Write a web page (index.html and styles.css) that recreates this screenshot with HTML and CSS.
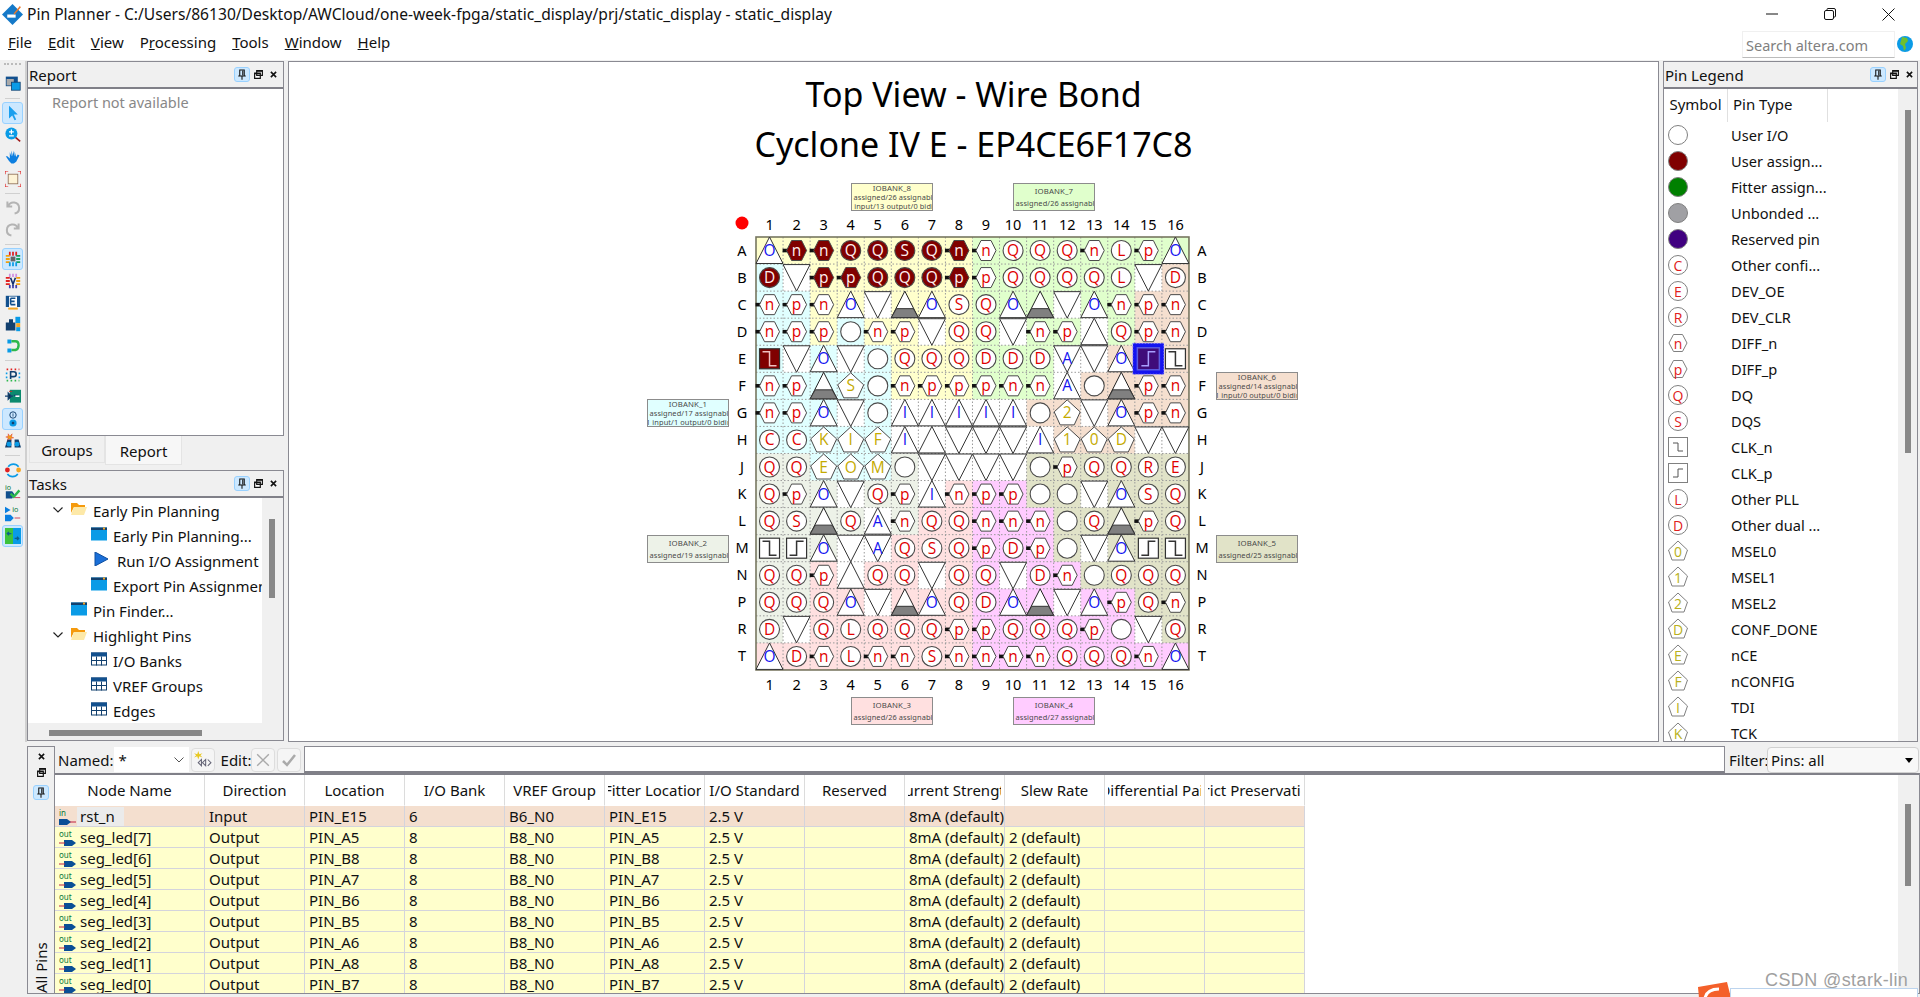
FILE: index.html
```html
<!DOCTYPE html>
<html lang="en">
<head>
    <meta charset="UTF-8">
    <title>Pin Planner</title>
    <link rel="stylesheet" href="styles.css">
</head>
<body>
    <svg class="defs" width="0" height="0">
        <symbol id="i-pin" viewBox="0 0 16 16"><path d="M5 2h6v8H5zM8 10v5M3 10h10M9 3v6" fill="none" stroke="#111" stroke-width="1.4"/></symbol>
        <symbol id="i-float" viewBox="0 0 10 10"><path d="M3 .7h6.3V6H3zM.7 3.5H7v5.8H.7z" fill="#fff" stroke="#111" stroke-width="1.3"/><path d="M3 1.2h6.3M.7 4h6.3" stroke="#111" stroke-width="1.6"/></symbol>
        <symbol id="i-close" viewBox="0 0 8 8"><path d="M1 1l6 6M7 1L1 7" stroke="#111" stroke-width="1.8"/></symbol>
        <symbol id="i-window" viewBox="0 0 16 14"><rect width="16" height="13" y="0.5" fill="#0a9be6"/><rect width="16" height="2.5" y="0.5" fill="#12406e"/><rect x="12" y="0.5" width="2" height="2" fill="#f5a623"/></symbol>
        <symbol id="i-folder" viewBox="0 0 16 14"><path d="M0 1h6l2 2h6v2H3L0 11z" fill="#f59a0c"/><path d="M3 5h13l-3 8H0z" fill="#fde9a8"/></symbol>
        <symbol id="i-table" viewBox="0 0 16 13"><rect x=".5" y=".5" width="15" height="12" fill="#fff" stroke="#12406e"/><rect width="16" height="4" fill="#12508e"/><path d="M0 8h16M5.500 4v9M10.500 4v9" stroke="#12406e"/></symbol>
        <symbol id="i-in" viewBox="0 0 17 17"><path d="M0 10h8l4 3-4 3H0z" fill="#0a4f96"/><path d="M11 13h6" stroke="#c02040"/></symbol>
        <symbol id="i-out" viewBox="0 0 17 17"><path d="M5 10h8l4 3-4 3H5z" fill="#0a4f96"/><path d="M0 13h6" stroke="#c02040"/></symbol>
    </svg>

    <header class="titlebar">
        <svg class="app-logo" viewBox="0 0 20 20">
            <path d="M10 0l10 10-10 10L0 10z" fill="#1579c8"/>
            <path d="M5 10h8v3H5z" fill="#fff"/>
            <path d="M11 9l6-7 1 1-6 7z" fill="#e8782a"/>
        </svg>
        <span class="title-text">Pin Planner - C:/Users/86130/Desktop/AWCloud/one-week-fpga/static_display/prj/static_display - static_display</span>
        <div class="win-buttons">
            <svg width="12" height="12" viewBox="0 0 12 12"><path d="M0 6h12" stroke="#111"/></svg>
            <svg width="12" height="12" viewBox="0 0 12 12"><path d="M3 2.500V1.500q0-1 1-1h6q1.500 0 1.500 1.500v6q0 1-1 1h-1" fill="none" stroke="#111"/><rect x=".5" y="2.500" width="9" height="9" rx="1.500" fill="none" stroke="#111"/></svg>
            <svg width="13" height="13" viewBox="0 0 13 13"><path d="M.5 .5l12 12M12.500 .5l-12 12" stroke="#111"/></svg>
        </div>
    </header>

    <nav class="menubar">
        <span><u>F</u>ile</span>
        <span><u>E</u>dit</span>
        <span><u>V</u>iew</span>
        <span>P<u>r</u>ocessing</span>
        <span><u>T</u>ools</span>
        <span><u>W</u>indow</span>
        <span><u>H</u>elp</span>
        <div class="search">Search altera.com</div>
        <svg class="globe" viewBox="0 0 16 16"><circle cx="8" cy="8" r="8" fill="#0b9be6"/><path d="M5 1l5 1 1 3-3 3 1 4-2 3-1-5-3-2 1-3z" fill="#6fbf30"/></svg>
    </nav>

    <div class="main">
        <aside class="toolbar">
            <div class="grip"></div>
            <div class="tool first"><svg viewBox="0 0 20 20"><rect x="1" y="2" width="15" height="12" fill="#12508e"/><rect x="2" y="5" width="9" height="8" fill="#aaa"/><rect x="8" y="9" width="11" height="10" fill="#0a9be6" stroke="#12406e"/></svg></div>
            <div class="sep"></div>
            <div class="tool on"><svg viewBox="0 0 20 20"><path d="M5 1v16l4-4 3 6 2-1-3-6h5z" fill="#1a9fee"/></svg></div>
            <div class="tool"><svg viewBox="0 0 20 20"><path d="M12 12l7 6" stroke="#a01c1c" stroke-width="2"/><circle cx="8" cy="8" r="7.500" fill="#0a9be6"/><path d="M5 6h6M8 3v6M5 11h6" stroke="#fff" stroke-width="1.500"/></svg></div>
            <div class="tool"><svg viewBox="0 0 20 20"><path d="M3 9l3 3V4l2 5V2l2 7V2l2 7V3l2 7 2-3 2 1-4 8-3 2H8l-3-3-4-6z" fill="#0d7fe0"/></svg></div>
            <div class="tool"><svg viewBox="0 0 20 20"><rect x="4" y="4" width="12" height="12" fill="#fdf3d6" stroke="#8a6a50"/><path d="M0 4V0h4M16 0h4v4M20 16v4h-4M4 20H0v-4" fill="none" stroke="#e02020" stroke-width="1.500"/></svg></div>
            <div class="sep"></div>
            <div class="tool"><svg viewBox="0 0 20 20"><path d="M3 2v6h6M4 8a7 7 0 1 1 8 9" fill="none" stroke="#b4b4b4" stroke-width="2.500"/></svg></div>
            <div class="tool"><svg viewBox="0 0 20 20"><path d="M17 2v6h-6M16 8a7 7 0 1 0-8 9" fill="none" stroke="#b4b4b4" stroke-width="2.500"/></svg></div>
            <div class="sep"></div>
            <div class="tool on"><svg viewBox="0 0 20 20"><rect x="7" y="7" width="6" height="6" fill="#666"/><path d="M6 1v5M10 1v5M14 1v5" stroke="#e02020" stroke-width="2.200"/><path d="M1 6h5M1 10h5M1 14h5" stroke="#f0a010" stroke-width="2.200"/><path d="M14 6h5M14 10h5M14 14h5" stroke="#16a060" stroke-width="2.200"/><path d="M6 14v5M10 14v5M14 14v5" stroke="#0a9be6" stroke-width="2.200"/></svg></div>
            <div class="tool"><svg viewBox="0 0 20 20"><path d="M6 1v4M10 1v4M14 1v4" stroke="#d090e0" stroke-width="2.200"/><path d="M1 6h5M1 10h5M1 14h5" stroke="#e02020" stroke-width="2.200"/><path d="M14 6h5M14 10h5M14 14h5" stroke="#f0a010" stroke-width="2.200"/><path d="M6 15v4M10 15v4M14 15v4" stroke="#4040b0" stroke-width="2.200"/><path d="M7 6l3 8 3-8" fill="none" stroke="#12306e" stroke-width="2"/></svg></div>
            <div class="tool"><svg viewBox="0 0 20 20"><rect x="1" y="1" width="18" height="14" fill="#12508e"/><rect x="5" y="2" width="10" height="13" fill="#fff"/><path d="M7 4h6M7 8h5M7 12h6M7 4v8" stroke="#12508e" stroke-width="2"/><path d="M4 17h12" stroke="#f5a623" stroke-width="2.500"/></svg></div>
            <div class="tool"><svg viewBox="0 0 20 20"><path d="M1 8h4V4h5v4h3v10H1z" fill="#12406e"/><rect x="13" y="1" width="6" height="8" fill="#0a9be6"/><rect x="14" y="9" width="5" height="5" fill="#f5a623"/><rect x="14" y="14" width="5" height="5" fill="#0a9be6"/></svg></div>
            <div class="tool"><svg viewBox="0 0 20 20"><path d="M3 2h5v5H3zM3 13h5v5H3z" fill="#0a9be6"/><path d="M8 4h5q4 0 4 5t-4 6H8" fill="none" stroke="#2db84d" stroke-width="3"/></svg></div>
            <div class="sep"></div>
            <div class="tool"><svg viewBox="0 0 20 20"><path d="M2 3h2M7 3h2M12 3h2M17 3h1" stroke="#e02020" stroke-width="2"/><path d="M2 17h2M7 17h2M12 17h2M17 17h1" stroke="#2db84d" stroke-width="2"/><path d="M2 7v2M18 7v2M2 12v2M18 12v2" stroke="#0a9be6" stroke-width="2"/><path d="M7 15V6h4q3 0 3 3t-3 3H7" fill="none" stroke="#12406e" stroke-width="2"/></svg></div>
            <div class="tool"><svg viewBox="0 0 20 20"><rect x="6" y="1" width="14" height="16" fill="#0c8a6e"/><path d="M0 9h10M4 5l4 4-4 4zM11 8h6" stroke="#12406e" stroke-width="1.500"/><path d="M13 9h5" stroke="#fff" stroke-width="2"/><path d="M5 3h4" stroke="#e02020"/></svg></div>
            <div class="tool on"><svg viewBox="0 0 20 20"><circle cx="10" cy="5" r="4" fill="none" stroke="#12406e" stroke-width="1.200"/><path d="M10 3v4" stroke="#12406e"/><circle cx="10" cy="15" r="4.500" fill="#0a9be6"/><rect x="8.500" y="13.500" width="3" height="3" fill="#12406e"/></svg></div>
            <div class="tool"><svg viewBox="0 0 20 20"><path d="M3 8h5v10H0zM12 8h5l3 10h-8z" fill="#12406e"/><circle cx="5" cy="14" r="3" fill="#0a9be6"/><circle cx="15" cy="14" r="3" fill="#0a9be6"/><path d="M4 1l2 3 3-3-1 4 3 1-4 1 1 2-3-2-2 2 1-3-3-1 3-1z" fill="#f0a010" stroke="#e02020" stroke-width=".5"/></svg></div>
            <div class="sep"></div>
            <div class="tool"><svg viewBox="0 0 20 20"><path d="M4 6a8 8 0 0 1 13 0M16 15a8 8 0 0 1-13 0" fill="none" stroke="#0a9be6" stroke-width="2"/><circle cx="3" cy="10" r="3" fill="#e02020"/><circle cx="17" cy="10" r="3" fill="#f5a623"/></svg></div>
            <div class="tool"><svg viewBox="0 0 20 20"><text x="0" y="8" class="tool-text">io</text><path d="M1 9h8l3 4-3 5H1z" fill="#12508e"/><path d="M7 12l4 4 7-8" fill="none" stroke="#2db84d" stroke-width="3"/><path d="M12 17h7" stroke="#c02040"/></svg></div>
            <div class="tool"><svg viewBox="0 0 20 20"><path d="M0 1l7 4-7 4zM0 11h7l4 4-4 4H0z" fill="#0a7fe0"/><text x="9" y="8" class="tool-text">io</text><path d="M12 15h7" stroke="#c02040"/></svg></div>
            <div class="tool on"><svg viewBox="0 0 20 20"><rect width="10" height="20" x="10" fill="#0a9be6"/><rect width="10" height="20" fill="#3cc23c"/><path d="M8 7H3m2-2L3 7l2 2M12 13h5m-2-2 2 2-2 2" fill="none" stroke="#0b5e8e" stroke-width="1.800"/></svg></div>
        </aside>

        <div class="left-col">
            <section class="panel report">
                <div class="panel-head">
                    <span>Report</span>
                    <div class="head-btns">
                        <span class="pin-btn"><svg><use href="#i-pin"/></svg></span>
                        <svg class="btn-float"><use href="#i-float"/></svg>
                        <svg class="btn-close"><use href="#i-close"/></svg>
                    </div>
                </div>
                <div class="report-body">Report not available</div>
            </section>
            <div class="tabs">
                <div class="tab">Groups</div>
                <div class="tab active">Report</div>
            </div>
            <section class="panel tasks">
                <div class="panel-head">
                    <span>Tasks</span>
                    <div class="head-btns">
                        <span class="pin-btn"><svg><use href="#i-pin"/></svg></span>
                        <svg class="btn-float"><use href="#i-float"/></svg>
                        <svg class="btn-close"><use href="#i-close"/></svg>
                    </div>
                </div>
                <div class="tree-wrap">
                    <ul class="tree">
                        <li class="lvl1"><svg class="chev" viewBox="0 0 10 6"><path d="M.5 .5L5 5 9.500 .5" fill="none" stroke="#222" stroke-width="1.200"/></svg><svg class="ticon"><use href="#i-folder"/></svg>Early Pin Planning</li>
                        <li class="lvl2"><svg class="ticon"><use href="#i-window"/></svg>Early Pin Planning...</li>
                        <li class="lvl2"><svg class="ticon play" viewBox="0 0 16 14"><path d="M1 0l13 7-13 7z" fill="#1a6fd8" stroke="#0d4fa0"/></svg>Run I/O Assignment Analysis</li>
                        <li class="lvl2"><svg class="ticon"><use href="#i-window"/></svg>Export Pin Assignments...</li>
                        <li class="lvl1"><svg class="ticon"><use href="#i-window"/></svg>Pin Finder...</li>
                        <li class="lvl1"><svg class="chev" viewBox="0 0 10 6"><path d="M.5 .5L5 5 9.500 .5" fill="none" stroke="#222" stroke-width="1.200"/></svg><svg class="ticon"><use href="#i-folder"/></svg>Highlight Pins</li>
                        <li class="lvl2"><svg class="ticon"><use href="#i-table"/></svg>I/O Banks</li>
                        <li class="lvl2"><svg class="ticon"><use href="#i-table"/></svg>VREF Groups</li>
                        <li class="lvl2"><svg class="ticon"><use href="#i-table"/></svg>Edges</li>
                    </ul>
                    <div class="vscroll"><div class="thumb tree-thumb"></div></div>
                </div>
                <div class="hscroll"><div class="hthumb"></div></div>
            </section>
        </div>

        <section class="center">
            <h1 class="chip-title">Top View - Wire Bond<br>Cyclone IV E - EP4CE6F17C8</h1>
            <div class="package">
                <svg id="pin-grid" class="pin-grid" viewBox="289 170 1369 569" width="1369" height="569"></svg>
                <div class="bank bank-8"><span>IOBANK_8</span><span>3 assigned/26 assignable</span><span>1 input/13 output/0 bidir</span></div>
                <div class="bank bank-7 two"><span>IOBANK_7</span><span>0 assigned/26 assignable</span></div>
                <div class="bank bank-1"><span>IOBANK_1</span><span>1 assigned/17 assignable</span><span>1 input/1 output/0 bidir</span></div>
                <div class="bank bank-2 two"><span>IOBANK_2</span><span>0 assigned/19 assignable</span></div>
                <div class="bank bank-3 two"><span>IOBANK_3</span><span>0 assigned/26 assignable</span></div>
                <div class="bank bank-4 two"><span>IOBANK_4</span><span>0 assigned/27 assignable</span></div>
                <div class="bank bank-5 two"><span>IOBANK_5</span><span>0 assigned/25 assignable</span></div>
                <div class="bank bank-6"><span>IOBANK_6</span><span>1 assigned/14 assignable</span><span>1 input/0 output/0 bidir</span></div>
            </div>
        </section>

        <section class="panel legend">
            <div class="panel-head">
                <span>Pin Legend</span>
                <div class="head-btns">
                    <span class="pin-btn"><svg><use href="#i-pin"/></svg></span>
                    <svg class="btn-float"><use href="#i-float"/></svg>
                    <svg class="btn-close"><use href="#i-close"/></svg>
                </div>
            </div>
            <div class="legend-wrap">
                <div class="legend-list">
                    <div class="legend-head"><span class="lh-sym">Symbol</span><span class="lh-type">Pin Type</span></div>
                    <div id="legend-rows"></div>
                </div>
                <div class="vscroll"><div class="thumb legend-thumb"></div></div>
            </div>
        </section>
    </div>

    <div class="bottom">
        <div class="strip">
            <svg class="btn-close"><use href="#i-close"/></svg>
            <svg class="btn-float"><use href="#i-float"/></svg>
            <span class="pin-btn"><svg><use href="#i-pin"/></svg></span>
            <span class="strip-label">All Pins</span>
        </div>
        <div class="bottom-main">
            <div class="filterbar">
                <label>Named:</label>
                <div class="combo"><span>*</span><svg viewBox="0 0 10 6"><path d="M.5 .5L5 5 9.500 .5" fill="none" stroke="#555"/></svg></div>
                <div class="sq-btn wand"><svg viewBox="0 0 18 18"><path d="M5 1l1 3 3-1-2 2 2 2-3-1-1 3-1-3-3 1 2-2-2-2 3 1z" fill="#e8c820"/><path d="M5 12l3-3v6zM9 12l3-3v6z" fill="none" stroke="#667"/><path d="M14 9l3 3-3 3" fill="none" stroke="#667"/></svg></div>
                <label class="edit-label">Edit:</label>
                <div class="sq-btn"><svg viewBox="0 0 12 12"><path d="M1 1l10 10M11 1L1 11" stroke="#aaa" stroke-width="1.200"/></svg></div>
                <div class="sq-btn"><svg viewBox="0 0 14 12"><path d="M1 7l4 4 8-10" fill="none" stroke="#aaa" stroke-width="2.500"/></svg></div>
                <div class="edit-input"></div>
                <label class="filter-label">Filter:</label>
                <div class="filter-select"><span>Pins: all</span><i class="caret"></i></div>
            </div>
            <div class="table-area">
                <table class="pins">
                    <colgroup><col class="c-name"><col span="11" class="c-std"></colgroup>
                    <thead>
                        <tr>
                            <th><div>Node Name</div></th>
                            <th><div>Direction</div></th>
                            <th><div>Location</div></th>
                            <th><div>I/O Bank</div></th>
                            <th><div>VREF Group</div></th>
                            <th><div>Fitter Location</div></th>
                            <th><div>I/O Standard</div></th>
                            <th><div>Reserved</div></th>
                            <th><div>Current Strength</div></th>
                            <th><div>Slew Rate</div></th>
                            <th><div>Differential Pair</div></th>
                            <th><div>Strict Preservation</div></th>
                        </tr>
                    </thead>
                    <tbody>
                        <tr class="row-in"><td class="node"><svg viewBox="0 0 17 17"><text y="7" class="tiny">in</text><use href="#i-in"/></svg><span class="sel-name">rst_n</span></td><td>Input</td><td>PIN_E15</td><td>6</td><td>B6_N0</td><td>PIN_E15</td><td>2.5 V</td><td></td><td>8mA (default)</td><td></td><td></td><td></td></tr>
                        <tr><td class="node"><svg viewBox="0 0 17 17"><text y="7" class="tiny">out</text><use href="#i-out"/></svg>seg_led[7]</td><td>Output</td><td>PIN_A5</td><td>8</td><td>B8_N0</td><td>PIN_A5</td><td>2.5 V</td><td></td><td>8mA (default)</td><td>2 (default)</td><td></td><td></td></tr>
                        <tr><td class="node"><svg viewBox="0 0 17 17"><text y="7" class="tiny">out</text><use href="#i-out"/></svg>seg_led[6]</td><td>Output</td><td>PIN_B8</td><td>8</td><td>B8_N0</td><td>PIN_B8</td><td>2.5 V</td><td></td><td>8mA (default)</td><td>2 (default)</td><td></td><td></td></tr>
                        <tr><td class="node"><svg viewBox="0 0 17 17"><text y="7" class="tiny">out</text><use href="#i-out"/></svg>seg_led[5]</td><td>Output</td><td>PIN_A7</td><td>8</td><td>B8_N0</td><td>PIN_A7</td><td>2.5 V</td><td></td><td>8mA (default)</td><td>2 (default)</td><td></td><td></td></tr>
                        <tr><td class="node"><svg viewBox="0 0 17 17"><text y="7" class="tiny">out</text><use href="#i-out"/></svg>seg_led[4]</td><td>Output</td><td>PIN_B6</td><td>8</td><td>B8_N0</td><td>PIN_B6</td><td>2.5 V</td><td></td><td>8mA (default)</td><td>2 (default)</td><td></td><td></td></tr>
                        <tr><td class="node"><svg viewBox="0 0 17 17"><text y="7" class="tiny">out</text><use href="#i-out"/></svg>seg_led[3]</td><td>Output</td><td>PIN_B5</td><td>8</td><td>B8_N0</td><td>PIN_B5</td><td>2.5 V</td><td></td><td>8mA (default)</td><td>2 (default)</td><td></td><td></td></tr>
                        <tr><td class="node"><svg viewBox="0 0 17 17"><text y="7" class="tiny">out</text><use href="#i-out"/></svg>seg_led[2]</td><td>Output</td><td>PIN_A6</td><td>8</td><td>B8_N0</td><td>PIN_A6</td><td>2.5 V</td><td></td><td>8mA (default)</td><td>2 (default)</td><td></td><td></td></tr>
                        <tr><td class="node"><svg viewBox="0 0 17 17"><text y="7" class="tiny">out</text><use href="#i-out"/></svg>seg_led[1]</td><td>Output</td><td>PIN_A8</td><td>8</td><td>B8_N0</td><td>PIN_A8</td><td>2.5 V</td><td></td><td>8mA (default)</td><td>2 (default)</td><td></td><td></td></tr>
                        <tr><td class="node"><svg viewBox="0 0 17 17"><text y="7" class="tiny">out</text><use href="#i-out"/></svg>seg_led[0]</td><td>Output</td><td>PIN_B7</td><td>8</td><td>B8_N0</td><td>PIN_B7</td><td>2.5 V</td><td></td><td>8mA (default)</td><td>2 (default)</td><td></td><td></td></tr>
                    </tbody>
                </table>
                <div class="vscroll table-scroll"><div class="thumb table-thumb"></div></div>
            </div>
        </div>
    </div>

    <!-- screenshot leftovers: blog watermark and the popup under it -->
    <div class="watermark">CSDN @stark-lin</div>
    <svg class="csdn-logo" viewBox="0 0 34 16"><path d="M1 5L30 0l4 16H2z" fill="#f4602a"/><path d="M22 7q-12 0-14 9" fill="none" stroke="#fff" stroke-width="3"/></svg>
    <div class="popup-bar"></div>

    <script src="pins.js"></script>
</body>
</html>
```

FILE: styles.css
```css
* {
    box-sizing: border-box;
}

body {
    margin: 0;
    width: 1920px;
    height: 997px;
    overflow: hidden;
    position: relative;
    background-color: #f0f0f0;
    color: #111;
    font-family: "Noto Sans", sans-serif;
    font-size: 15px;
}

.defs {
    position: absolute;
}

.tiny {
    font-size: 8px;
    fill: #0a7a3a;
    font-family: "Noto Sans", sans-serif;
}

.tool-text {
    font-size: 9px;
    fill: #0a7a3a;
    font-family: "Noto Sans", sans-serif;
}

/* title + menu */
.titlebar {
    height: 28px;
    background: #fff;
    display: flex;
    align-items: center;
    padding-left: 2px;
}

.app-logo {
    width: 21px;
    height: 21px;
    margin-right: 4px;
}

.title-text {
    font-size: 15.6px;
}

.win-buttons {
    margin-left: auto;
    display: flex;
    align-items: center;
    gap: 46px;
    padding-right: 25px;
}

.menubar {
    height: 32px;
    background: #fff;
    display: flex;
    align-items: flex-start;
    gap: 16px;
    padding: 3px 0 0 8px;
    position: relative;
    line-height: 22px;
}

.search {
    margin-left: auto;
    margin-right: 25px;
    width: 153px;
    height: 27px;
    line-height: 26px;
    padding-left: 3px;
    font-size: 14.5px;
    color: #808080;
    border: 1px solid #f0f0f0;
    border-bottom-color: #bbb;
    background: #fff;
}

.globe {
    position: absolute;
    right: 7px;
    top: 8px;
    width: 16px;
    height: 16px;
}

/* main row */
.main {
    display: flex;
    height: 682px;
    padding-top: 1px;
}

.toolbar {
    width: 27px;
    flex: none;
    border-right: 2px solid #d0d0d0;
    padding-top: 2px;
}

.grip {
    height: 4px;
    margin: 0 4px;
    border-top: 2px dotted #bbb;
}

.tool {
    height: 21.85px;
    display: flex;
    align-items: center;
    justify-content: center;
    margin: 0 2px;
}

.tool.first {
    margin-top: 4px;
    height: 24px;
}

.tool svg {
    width: 16px;
    height: 16px;
}

.tool.on {
    background: #cce8ff;
    border: 1px solid #99d1ff;
    border-radius: 3px;
}

.sep {
    height: 7.3px;
    margin: 0 5px;
    background: linear-gradient(#d0d0d0, #d0d0d0) center / 100% 1px no-repeat;
}

.left-col {
    width: 257px;
    flex: none;
    display: flex;
    flex-direction: column;
}

.panel {
    border: 1px solid #8a8a92;
    background: #fff;
    display: flex;
    flex-direction: column;
}

.panel-head {
    height: 27px;
    flex: none;
    background: #f0f0f0;
    border-bottom: 2px solid #808088;
    display: flex;
    align-items: center;
    justify-content: space-between;
    padding: 0 4px 0 1px;
}

.legend .panel-head {
    padding-right: 2px;
}

.head-btns {
    display: flex;
    align-items: center;
    gap: 4px;
    padding-right: 2px;
}

.pin-btn {
    width: 16px;
    height: 15px;
    background: #cce8ff;
    border: 1px solid #99d1ff;
    border-radius: 3px;
    display: flex;
    align-items: center;
    justify-content: center;
}

.pin-btn svg {
    width: 12px;
    height: 13px;
}

.btn-float {
    width: 9px;
    height: 9px;
}

.btn-close {
    width: 7px;
    height: 7px;
    margin-left: 3px;
}

.report {
    height: 375px;
}

.report-body {
    padding: 3px 24px;
    color: #888;
    font-size: 14.5px;
}

.tabs {
    height: 34px;
    display: flex;
    padding-left: 2px;
    align-items: flex-start;
}

.tab {
    width: 76px;
    height: 27px;
    background: #f0f0f0;
    border: 1px solid #e4e4e4;
    border-top: none;
    text-align: center;
    line-height: 29px;
}

.tab.active {
    height: 29px;
    width: 77px;
    background: #f7f7f7;
    line-height: 31px;
}

.tasks {
    height: 271px;
    background: #f0f0f0;
}

.tree-wrap {
    height: 225px;
    flex: none;
    display: flex;
}

.tree {
    list-style: none;
    margin: 0;
    padding: 0;
    width: 234px;
    background: #fff;
    overflow: hidden;
}

.tree li {
    height: 25px;
    display: flex;
    align-items: center;
    white-space: nowrap;
    position: relative;
}

.lvl1 {
    padding-left: 43px;
}

.lvl2 {
    padding-left: 63px;
}

.chev {
    position: absolute;
    left: 25px;
    top: 9px;
    width: 10px;
    height: 6px;
}

.ticon {
    width: 16px;
    height: 14px;
    margin-right: 6px;
    margin-top: -3px;
    flex: none;
}

.ticon.play {
    margin-left: 3px;
    margin-right: 7px;
}

.vscroll {
    flex: 1;
    background: #f0f0f0;
    position: relative;
}

.thumb {
    position: absolute;
    width: 6px;
    background: #888;
}

.tree-thumb {
    left: 7px;
    top: 21px;
    height: 79px;
}

.hscroll {
    flex: 1;
    position: relative;
}

.hthumb {
    position: absolute;
    left: 21px;
    top: 7px;
    width: 153px;
    height: 6px;
    background: #888;
}

/* center: package view */
.center {
    width: 1371px;
    flex: none;
    margin-left: 4px;
    border: 1px solid #8a8a92;
    background: #fff;
    overflow: hidden;
}

.chip-title {
    height: 108px;
    margin: 0;
    padding-top: 7px;
    text-align: center;
    font-size: 34px;
    font-weight: 400;
    line-height: 50px;
    color: #000;
}

.package {
    position: relative;
    height: 569px;
}

.pin-grid {
    display: block;
    font-family: "Noto Sans", sans-serif;
}

.pin-grid .pin-letter {
    font-family: "Open Sans", sans-serif;
}

.bank {
    position: absolute;
    width: 82px;
    height: 28px;
    border: 1.5px solid #8c8c8c;
    font-size: 7.4px;
    line-height: 9px;
    letter-spacing: .1px;
    color: #4a4a4a;
    overflow: hidden;
    padding-top: 0;
}

.bank span {
    display: flex;
    justify-content: center;
    white-space: nowrap;
}

.bank span:first-child {
    font-size: 7.8px;
}

.bank.two {
    line-height: 12px;
    padding-top: 1px;
}

.bank-8 { left: 562px; top: 13px; background: #ffffcc; }
.bank-7 { left: 724px; top: 13px; background: #e0ffcc; }
.bank-1 { left: 358px; top: 229px; background: #e0ffff; }
.bank-2 { left: 358px; top: 365px; background: #edf2e8; }
.bank-3 { left: 562px; top: 527px; background: #ffe0e0; }
.bank-4 { left: 724px; top: 527px; background: #ffccff; }
.bank-5 { left: 927px; top: 365px; background: #e1e3c8; }
.bank-6 { left: 927px; top: 202px; background: #f5dfcf; }

/* right: legend */
.legend {
    width: 255px;
    flex: none;
    margin-left: 4px;
}

.legend-wrap {
    flex: 1;
    display: flex;
    overflow: hidden;
}

.legend-list {
    width: 234px;
    flex: none;
}

.legend-head {
    height: 33px;
    display: flex;
    align-items: center;
}

.lh-sym {
    width: 64px;
    height: 100%;
    line-height: 31px;
    text-align: center;
    border-right: 1px solid #e0e0e0;
}

.lh-type {
    width: 100px;
    height: 100%;
    line-height: 31px;
    padding-left: 5px;
    border-right: 1px solid #e0e0e0;
}

.legend-row {
    height: 26px;
    display: flex;
    align-items: center;
    font-size: 14.6px;
}

.legend-row svg {
    width: 24px;
    height: 26px;
    margin-left: 2px;
    margin-right: 41px;
    flex: none;
    font-family: "Open Sans", sans-serif;
}

.legend-thumb {
    left: 7px;
    top: 21px;
    height: 343px;
}

/* bottom: pin table */
.bottom {
    position: absolute;
    left: 27px;
    top: 746px;
    right: 0;
    height: 248px;
    display: flex;
    border-bottom: 1px solid #8a8a92;
}

.strip {
    width: 28px;
    flex: none;
    border: 1px solid #8a8a92;
    border-bottom: none;
    display: flex;
    flex-direction: column;
    align-items: center;
    padding-top: 6px;
    gap: 8px;
}

.strip .btn-close {
    margin-left: 0;
}

.strip-label {
    margin-top: auto;
    writing-mode: vertical-rl;
    transform: rotate(180deg);
    height: 54px;
}

.bottom-main {
    flex: 1;
    min-width: 0;
    display: flex;
    flex-direction: column;
}

.filterbar {
    height: 27px;
    flex: none;
    display: flex;
    align-items: center;
    padding-left: 3px;
}

.combo {
    width: 75px;
    height: 25px;
    background: #fff;
    display: flex;
    align-items: center;
    justify-content: space-between;
    padding: 0 5px;
}

.combo svg {
    width: 10px;
    height: 6px;
}

.sq-btn {
    width: 24px;
    height: 24px;
    margin-left: 2px;
    border: 1px solid #ddd;
    border-radius: 4px;
    background: #f5f5f5;
    display: flex;
    align-items: center;
    justify-content: center;
}

.sq-btn svg {
    width: 14px;
    height: 14px;
}

.sq-btn.wand svg {
    width: 19px;
    height: 19px;
}

.edit-label {
    margin-left: 6px;
    width: 28px;
    white-space: nowrap;
}

.edit-input {
    flex: 1;
    height: 27px;
    margin-left: 3px;
    background: #fff;
    border: 1px solid #8a8a92;
    border-bottom: 2px solid #808088;
}

.filter-label {
    margin-left: 4px;
    width: 38px;
}

.filter-select {
    width: 152px;
    height: 26px;
    margin-right: 1px;
    background: #f8f8f8;
    border: 1px solid #d0d0d0;
    border-radius: 4px;
    display: flex;
    align-items: center;
    padding-left: 3px;
    position: relative;
    flex: none;
}

.caret {
    position: absolute;
    right: 5px;
    top: 10px;
    border: 4px solid transparent;
    border-top: 5px solid #000;
}

.table-area {
    flex: 1;
    min-height: 0;
    display: flex;
    overflow: hidden;
    background: #fff;
    border-top: 2px solid #808088;
    border-right: 1px solid #8a8a92;
}

.pins {
    width: 1250px;
    table-layout: fixed;
    border-collapse: separate;
    border-spacing: 0;
    flex: none;
}

.c-name {
    width: 150px;
}

.c-std {
    width: 100px;
}

.pins th {
    height: 31px;
    font-weight: 400;
    padding: 0 3px;
    border-right: 1px solid #dcdcdc;
    border-bottom: 1px solid #fff;
}

.pins th div {
    display: flex;
    justify-content: center;
    overflow: hidden;
    white-space: nowrap;
}

.pins td {
    height: 21px;
    padding: 1px 0 0 4px;
    background: #ffffcc;
    border-right: 1px solid #d4d4dc;
    border-bottom: 1px solid #d4d4dc;
    white-space: nowrap;
    overflow: hidden;
    line-height: 19px;
}

.pins .row-in td {
    background: #f4dfcf;
}

.node svg {
    width: 17px;
    height: 17px;
    vertical-align: -4px;
    margin-right: 4px;
}

.sel-name {
    display: inline-block;
    width: 47px;
    background: #ebebeb;
    padding-left: 3px;
    margin-left: -3px;
}

.table-scroll {
    flex: none;
    width: 21px;
    margin-left: auto;
    background: #f0f0f0;
}

.table-thumb {
    left: 7px;
    top: 29px;
    height: 82px;
}

/* watermark stuff on top of everything */
.watermark {
    position: absolute;
    left: 1765px;
    top: 968px;
    font-family: "Liberation Sans", sans-serif;
    font-size: 18px;
    line-height: 24px;
    letter-spacing: .4px;
    color: #a0a0a0;
}

.csdn-logo {
    position: absolute;
    left: 1696px;
    top: 982px;
    width: 36px;
    height: 16px;
}

.popup-bar {
    position: absolute;
    left: 1730px;
    top: 988px;
    width: 188px;
    height: 12px;
    background: #fff;
    border: 1px solid #bcd4ee;
}
```

FILE: pins.js
```js
var CELL = 27.06, LEFT = 756, TOP = 237;
var ROWS = 'ABCDEFGHJKLMNPRT';

// pin tokens, one row per line
// o empty, ^ up, v down, # ^ with gray foot, <x pentagon, cn/cp clock, ! assigned, * selected
var PINS = [
    '^O !n !n !Q !Q !S !Q !n n Q Q Q n L p ^O',
    '!D v !p !p !Q !Q !Q !p p Q Q Q Q L v D',
    'n p n ^O v # ^O S Q ^O # v ^O n p n',
    'n p p o n p v Q Q v n p ^ Q p n',
    '!cn v ^O v o Q Q Q D D D vA v ^O *cp cn',
    'n p # <S o n p p p n n ^A o # p n',
    'n p ^O v o ^I ^I ^I ^I ^I o <2 v ^O p n',
    'C C <K <I <F ^I ^ v v v ^I <1 <0 <D v v',
    'Q Q <E <O <M o v v v v o p Q Q R E',
    'Q p ^O v Q p ^I n p p o o v ^O S Q',
    'Q S # Q ^A n Q Q n n n o Q # p Q',
    'cn cp ^O v vA Q S Q p D p o v ^O cp cn',
    'Q Q p ^ Q Q v Q Q v D n o Q Q Q',
    'Q Q Q ^O v # ^O Q D ^O # v ^O p Q n',
    'D v Q L Q Q Q p p Q Q Q p o v Q',
    '^O D n L n n S n n n n Q Q Q n ^O'
];

// bank of each cell, 0 = no bank colour
var BANKS = [
    '8888888877777777',
    '1088888877777706',
    '1188088877707766',
    '1181880870770766',
    '1010188877700666',
    '1111188877706666',
    '1110100000660666',
    '1111100000066600',
    '2211120000555555',
    '2220220344550555',
    '2222023344455555',
    '2220033344450555',
    '2230330340445555',
    '2233033344404455',
    '2033333344444405',
    '3333333344444444'
];

var BANK_COLORS = {
    0: '#ffffff', 1: '#e0ffff', 2: '#edf2e8', 3: '#ffe0e0', 4: '#ffccff',
    5: '#e1e3c8', 6: '#f5dfcf', 7: '#e0ffcc', 8: '#ffffcc'
};

var STROKE = '#4a4a4a';

function label(ch, color, size) {
    return '<text class="pin-letter" text-anchor="middle" y="5.500" font-size="' + (size || 15.5) + '" fill="' + color + '">' + ch + '</text>';
}

function clockPath(kind, color) {
    var d = kind == 'n' ? 'M-7 -7H0V7H7' : 'M-7 7H0V-7H7';
    return '<path d="' + d + '" fill="none" stroke="' + color + '" stroke-width="1.500"/>';
}

function pinSvg(tok) {
    var fill = '#fff', text = '#e00000', assigned = false;
    if (tok[0] == '!') {
        fill = '#800000';
        text = '#fff0f0';
        assigned = true;
        tok = tok.slice(1);
    }
    if (tok[0] == '*') {
        return '<rect x="-15.500" y="-15.500" width="31" height="31" fill="#1414f0"/>' +
            '<rect x="-15.500" y="-15.500" width="31" height="31" fill="none" stroke="#9090ff" stroke-dasharray="1 2"/>' +
            '<rect x="-11" y="-11" width="22" height="22" fill="#3f0c7a" stroke="#5a5ae0" stroke-width="1.500"/>' +
            clockPath('p', '#a8a0ff');
    }
    if (tok == 'cn' || tok == 'cp') {
        return '<rect x="-10" y="-10" width="20" height="20" fill="' + fill + '" stroke="#333" stroke-width="1.200"/>' +
            clockPath(tok[1], assigned ? '#f0c0c0' : '#333');
    }
    if (tok == 'n' || tok == 'p') {
        return '<rect x="-14" y="-1.800" width="5" height="3.600" fill="#111"/>' +
            '<path d="M-10 0L-5 -10H5L10 0L5 10H-5Z" fill="' + fill + '" stroke="' + STROKE + '"/>' + label(tok, text);
    }
    if (tok[0] == '^') {
        return '<path d="M0 -13.500L13.500 13H-13.500Z" fill="#fff" stroke="#333"/>' +
            (tok[1] ? label(tok[1], '#1414f0') : '');
    }
    if (tok[0] == 'v') {
        return '<path d="M-13.500 -13H13.500L0 13.500Z" fill="#fff" stroke="#333"/>' +
            (tok[1] ? label(tok[1], '#1414f0') : '');
    }
    if (tok == '#') {
        return '<path d="M0 -13.500L13.500 13H-13.500Z" fill="#fff" stroke="#222"/>' +
            '<path d="M-8.500 4H8.500L13.500 13H-13.500Z" fill="#808080" stroke="#333"/>';
    }
    if (tok[0] == '<') {
        return '<path d="M0 -13L13 -1L7 12H-7L-13 -1Z" fill="#fff" stroke="' + STROKE + '"/>' + label(tok[1], '#c4aa00');
    }
    var shape = '<circle r="10" fill="' + fill + '" stroke="' + STROKE + '" stroke-width="1.100"/>';
    return tok == 'o' ? shape : shape + label(tok, text);
}

function buildGrid() {
    var out = '';
    var size = CELL * 16;

    BANKS.forEach(function (row, r) {
        row.split('').forEach(function (b, c) {
            out += '<rect x="' + (LEFT + c * CELL) + '" y="' + (TOP + r * CELL) + '" width="' + (CELL + .4) +
                '" height="' + (CELL + .4) + '" fill="' + BANK_COLORS[b] + '"/>';
        });
    });

    for (var i = 1; i < 16; i++) {
        var p = i * CELL;
        out += '<path d="M' + (LEFT + p) + ' ' + TOP + 'v' + size + 'M' + LEFT + ' ' + (TOP + p) + 'h' + size +
            '" stroke="#9a9a9a" stroke-dasharray="1.500 2"/>';
    }
    out += '<rect x="' + LEFT + '" y="' + TOP + '" width="' + size + '" height="' + size + '" fill="none" stroke="#777760" stroke-width="1.600"/>';

    PINS.forEach(function (row, r) {
        row.split(' ').forEach(function (tok, c) {
            var x = LEFT + (c + .5) * CELL;
            var y = TOP + (r + .5) * CELL;
            out += '<g transform="translate(' + x + ' ' + y + ')">' + pinSvg(tok) + '</g>';
        });
    });

    // axis labels
    for (var n = 0; n < 16; n++) {
        var cx = LEFT + (n + .5) * CELL;
        var cy = TOP + (n + .5) * CELL;
        out += '<text x="' + cx + '" y="230" text-anchor="middle" font-size="14.500">' + (n + 1) + '</text>';
        out += '<text x="' + cx + '" y="690" text-anchor="middle" font-size="14.500">' + (n + 1) + '</text>';
        out += '<text x="742" y="' + (cy + 5) + '" text-anchor="middle" font-size="14.500">' + ROWS[n] + '</text>';
        out += '<text x="1202" y="' + (cy + 5) + '" text-anchor="middle" font-size="14.500">' + ROWS[n] + '</text>';
    }
    out += '<circle cx="742" cy="223" r="6.500" fill="#ff0000"/>';

    document.getElementById('pin-grid').innerHTML = out;
}

var LEGEND = [
    ['o', 'User I/O'], ['#800000', 'User assign...'], ['#008000', 'Fitter assign...'],
    ['#a0a0a4', 'Unbonded ...'], ['#400080', 'Reserved pin'], ['C', 'Other confi...'],
    ['E', 'DEV_OE'], ['R', 'DEV_CLR'], ['n', 'DIFF_n'], ['p', 'DIFF_p'], ['Q', 'DQ'], ['S', 'DQS'],
    ['cn', 'CLK_n'], ['cp', 'CLK_p'], ['L', 'Other PLL'], ['D', 'Other dual ...'],
    ['<0', 'MSEL0'], ['<1', 'MSEL1'], ['<2', 'MSEL2'], ['<D', 'CONF_DONE'],
    ['<E', 'nCE'], ['<F', 'nCONFIG'], ['<I', 'TDI'], ['<K', 'TCK']
];

function legendIcon(tok) {
    var gray = '#808080', red = '#e02020', olive = '#b8b020';
    if (tok[0] == '#') {
        return '<circle r="9.500" fill="' + tok + '" stroke="' + gray + '"/>';
    }
    if (tok == 'cn' || tok == 'cp') {
        var d = tok == 'cn' ? 'M-5 -4H0V4H5' : 'M-5 4H0V-4H5';
        return '<rect x="-9.500" y="-9.500" width="19" height="19" fill="#fff" stroke="' + gray + '"/>' +
            '<path d="' + d + '" fill="none" stroke="#555"/>';
    }
    if (tok == 'n' || tok == 'p') {
        return '<path d="M-9 0L-4.500 -8.500H4.500L9 0L4.500 8.500H-4.500Z" fill="#fff" stroke="' + gray + '"/>' + label(tok, red, 14);
    }
    if (tok[0] == '<') {
        return '<path d="M0 -10L9.500 -1L6 9H-6L-9.500 -1Z" fill="#fff" stroke="' + gray + '"/>' + label(tok[1], olive, 14);
    }
    var c = '<circle r="9.500" fill="#fff" stroke="' + gray + '"/>';
    return tok == 'o' ? c : c + label(tok, red, 14);
}

function buildLegend() {
    var out = '';
    LEGEND.forEach(function (item) {
        out += '<div class="legend-row"><svg viewBox="-12 -13 24 26">' + legendIcon(item[0]) + '</svg><span>' + item[1] + '</span></div>';
    });
    document.getElementById('legend-rows').innerHTML = out;
}

buildGrid();
buildLegend();
```
